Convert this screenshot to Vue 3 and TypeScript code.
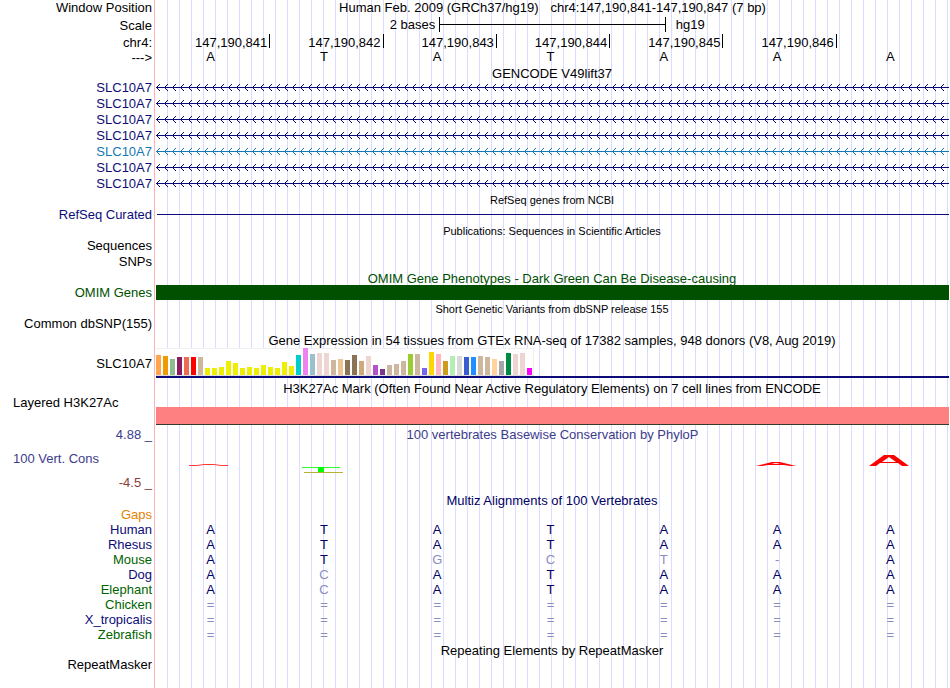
<script setup lang="ts">
interface Base {
  char: string
  match: boolean
}

interface Species {
  name: string
  tone: 'navy' | 'green'
  bases: Base[]
}

const sequence: string[] = ['A', 'T', 'A', 'T', 'A', 'A', 'A']
const positions: string[] = [
  '147,190,841',
  '147,190,842',
  '147,190,843',
  '147,190,844',
  '147,190,845',
  '147,190,846',
  '',
]

const genes: { id: number; tone: string }[] = [
  { id: 1, tone: 'navy' },
  { id: 2, tone: 'navy' },
  { id: 3, tone: 'navy' },
  { id: 4, tone: 'navy' },
  { id: 5, tone: 'blue' },
  { id: 6, tone: 'navy' },
  { id: 7, tone: 'navy' },
]

// Bar height in pixels and colour for each GTEx tissue.
const tissues: [number, string][] = [
  [20, '#ffa54f'], [19, '#ee9a00'], [16, '#8fbc8f'], [18, '#8b1c62'], [18, '#ee6a50'], [18, '#ff0000'],
  [18, '#cdb79e'], [7, '#eeee00'], [7, '#eeee00'], [8, '#eeee00'], [14, '#eeee00'], [12, '#eeee00'],
  [7, '#eeee00'], [8, '#eeee00'], [7, '#eeee00'], [10, '#eeee00'], [8, '#eeee00'], [7, '#eeee00'],
  [13, '#eeee00'], [9, '#eeee00'], [20, '#00cdcd'], [27, '#ee82ee'], [21, '#9ac0cd'], [22, '#eed5d2'],
  [22, '#eed5d2'], [15, '#cdb79e'], [16, '#eec591'], [15, '#8b7355'], [20, '#8b7355'], [14, '#cdaa7d'],
  [19, '#eed5d2'], [10, '#b452cd'], [6, '#7a378b'], [10, '#cdb79e'], [11, '#cdb79e'], [14, '#cdb79e'],
  [21, '#9acd32'], [21, '#cdb79e'], [7, '#7a67ee'], [23, '#ffd700'], [21, '#ffb6c1'], [14, '#cd9b1d'],
  [19, '#b4eeb4'], [19, '#d9d9d9'], [18, '#3a5fcd'], [18, '#1e90ff'], [19, '#cdb79e'], [18, '#cdb79e'],
  [16, '#ffd39b'], [14, '#a6a6a6'], [22, '#008b45'], [21, '#eed5d2'], [22, '#eed5d2'], [7, '#ff00ff'],
]

function align(name: string, tone: 'navy' | 'green', text: string): Species {
  return {
    name,
    tone,
    bases: [...text].map((char, i) => ({ char, match: char === sequence[i] })),
  }
}

const species: Species[] = [
  align('Human', 'navy', 'ATATAAA'),
  align('Rhesus', 'navy', 'ATATAAA'),
  align('Mouse', 'green', 'ATGCT-A'),
  align('Dog', 'navy', 'ACATAAA'),
  align('Elephant', 'green', 'ACATAAA'),
  align('Chicken', 'green', '======='),
  align('X_tropicalis', 'navy', '======='),
  align('Zebrafish', 'green', '======='),
]
</script>

<template>
  <main class="browser">
    <div class="row">
      <span class="label">Window Position</span>
      <h1 class="title position">
        <span>Human Feb. 2009 (GRCh37/hg19)</span><span>chr4:147,190,841-147,190,847 (7 bp)</span>
      </h1>
    </div>
    <div class="row ruler">
      <span class="label">Scale</span>
      <div class="scale">
        <span class="scale-size">2 bases</span>
        <span class="scale-bar"></span>
        <span class="scale-assembly">hg19</span>
      </div>
    </div>
    <div class="row ruler">
      <span class="label">chr4:</span>
      <div class="cells">
        <span v-for="(p, i) in positions" :key="i" class="tick" :class="{ open: !p }">{{ p }}</span>
      </div>
    </div>
    <div class="row strand">
      <span class="label">---&gt;</span>
      <div class="cells bases">
        <span v-for="(b, i) in sequence" :key="i">{{ b }}</span>
      </div>
    </div>

    <section>
      <h2 class="title">GENCODE V49lift37</h2>
      <div v-for="g in genes" :key="g.id" class="row" :class="g.tone">
        <span class="label">SLC10A7</span>
        <svg class="gene" aria-hidden="true" shape-rendering="crispEdges">
          <defs>
            <pattern :id="`strand-${g.id}`" width="8" height="16" patternUnits="userSpaceOnUse">
              <path
                d="M0 7h8v1H0zM1 6h1v1H1zM2 5h1v1H2zM3 4h1v1H3zM1 8h1v1H1zM2 9h1v1H2zM3 10h1v1H3z"
                fill="currentColor"
              />
            </pattern>
          </defs>
          <rect width="100%" height="16" :fill="`url(#strand-${g.id})`" />
        </svg>
      </div>
    </section>

    <section>
      <h2 class="title small">RefSeq genes from NCBI</h2>
      <div class="row navy">
        <span class="label">RefSeq Curated</span>
        <div class="refseq"></div>
      </div>
    </section>

    <section>
      <h2 class="title small">Publications: Sequences in Scientific Articles</h2>
      <div class="row"><span class="label">Sequences</span></div>
      <div class="row"><span class="label">SNPs</span></div>
    </section>

    <section class="omim">
      <h2 class="title">OMIM Gene Phenotypes - Dark Green Can Be Disease-causing</h2>
      <div class="row">
        <span class="label">OMIM Genes</span>
        <div class="omim-bar"></div>
      </div>
    </section>

    <section>
      <h2 class="title small">Short Genetic Variants from dbSNP release 155</h2>
      <div class="row"><span class="label">Common dbSNP(155)</span></div>
    </section>

    <section>
      <h2 class="title">Gene Expression in 54 tissues from GTEx RNA-seq of 17382 samples, 948 donors (V8, Aug 2019)</h2>
      <div class="row expression">
        <span class="label">SLC10A7</span>
        <div class="gtex">
          <div class="chart">
            <span
              v-for="(t, i) in tissues"
              :key="i"
              class="bar"
              :style="{ height: `${t[0]}px`, background: t[1] }"
            ></span>
          </div>
        </div>
      </div>
    </section>

    <section>
      <h2 class="title">H3K27Ac Mark (Often Found Near Active Regulatory Elements) on 7 cell lines from ENCODE</h2>
      <div class="row histone">
        <span class="label start">Layered H3K27Ac</span>
        <div class="signal"></div>
      </div>
    </section>

    <section class="phylop">
      <div class="row heading">
        <span class="label">4.88 _</span>
        <h2 class="title inline">100 vertebrates Basewise Conservation by PhyloP</h2>
      </div>
      <div class="row conservation">
        <div class="axis">
          <span class="label start">100 Vert. Cons</span>
          <span class="label minimum">-4.5 _</span>
        </div>
        <div class="cells logos">
          <svg viewBox="0 0 42 20" aria-hidden="true">
            <path d="M1 11.5H9L16 10.5H26L33 11.5H40" fill="none" stroke="#ff3c3c" />
          </svg>
          <svg viewBox="0 0 42 20" aria-hidden="true">
            <path d="M1 13.5H39" stroke="#32ff32" />
            <path d="M3 18.5H42" stroke="#b4b432" />
            <path d="M17 13H23V18H17Z" fill="#00ff00" />
          </svg>
          <i></i>
          <i></i>
          <i></i>
          <svg viewBox="0 0 42 20" aria-hidden="true">
            <path d="M1 12L17 8H25L41 12H35L29 11H13L7 12ZM16 10H26L21 9Z" fill="#ff0000" fill-rule="evenodd" />
          </svg>
          <svg viewBox="0 0 42 20" aria-hidden="true">
            <path
              d="M1 12L16 1H26L41 12H34L30 9H12L8 12ZM14 8H28L21 3Z"
              fill="#ff0000"
              fill-rule="evenodd"
            />
          </svg>
        </div>
      </div>
    </section>

    <section class="multiz">
      <h2 class="title">Multiz Alignments of 100 Vertebrates</h2>
      <table>
        <tbody>
          <tr>
            <th scope="row" class="gaps">Gaps</th>
            <td v-for="n in 7" :key="n"></td>
          </tr>
          <tr v-for="s in species" :key="s.name">
            <th scope="row" :class="s.tone">{{ s.name }}</th>
            <td v-for="(b, i) in s.bases" :key="i" :class="{ mismatch: !b.match }">{{ b.char }}</td>
          </tr>
        </tbody>
      </table>
    </section>

    <section>
      <h2 class="title">Repeating Elements by RepeatMasker</h2>
      <div class="row"><span class="label">RepeatMasker</span></div>
    </section>
  </main>
</template>

<style>
body {
  margin: 0;
  background: #fff;
}
</style>

<style scoped>
.browser {
  box-sizing: border-box;
  min-height: 100vh;
  margin-right: 1px;
  font: 13px/16px "Liberation Sans", Arial, Helvetica, sans-serif;
  color: #000;
  background:
    linear-gradient(#ffb4b4, #ffb4b4) 154px 0 / 1px 100% no-repeat,
    linear-gradient(#fff, #fff) 0 0 / 156px 100% no-repeat,
    linear-gradient(90deg, #dcdcff 1px, transparent 1px) 167px 0 / 12px 100% repeat-x;
}

.row {
  display: grid;
  grid-template-columns: 152px minmax(0, 1fr);
  column-gap: 4px;
  min-height: 16px;
}

.label {
  text-align: right;
  white-space: nowrap;
}

.label.start {
  padding-left: 13px;
  text-align: left;
}

.title {
  height: 15px;
  margin: 0 0 0 155px;
  font-size: 13px;
  font-weight: 400;
  line-height: 17px;
  text-align: center;
  white-space: nowrap;
}

.title.small {
  font-size: 11px;
}

.title.position,
.title.inline {
  margin: 0;
}

.title.position {
  display: flex;
  justify-content: center;
  gap: 12px;
  line-height: 15px;
}

.navy {
  color: #0c0c78;
}

.blue {
  color: #1478b4;
}

.green {
  color: #006400;
}

.ruler {
  height: 17px;
  line-height: 20px;
}

.row.strand {
  height: 15px;
  min-height: 0;
}

.scale {
  display: grid;
  grid-template-columns: 5fr 4fr 5fr;
}

.scale-size {
  padding-right: 4px;
  line-height: 17px;
  text-align: right;
}

.scale-assembly {
  padding-left: 10px;
  line-height: 17px;
}

.scale-bar {
  height: 15px;
  margin: 1px 0;
  border: solid #000;
  border-width: 0 1px;
  background: linear-gradient(#000, #000) 0 7px / 100% 1px no-repeat;
}

.cells {
  display: grid;
  grid-template-columns: repeat(7, minmax(0, 1fr));
}

.tick {
  height: 14px;
  margin: 1px -1px 0 0;
  padding-right: 2px;
  border-right: 1px solid #000;
  line-height: 17px;
  text-align: right;
}

.tick.open {
  border-color: transparent;
}

.bases {
  line-height: 14px;
  text-align: center;
}

.bases span {
  padding-right: 4px;
}

.gene {
  display: block;
  width: 100%;
  height: 16px;
}

.refseq {
  height: 1px;
  margin: 7px 0 0 1px;
  background: currentColor;
}

.omim {
  color: #005000;
}

.omim-bar {
  height: 15px;
  background: currentColor;
}

.expression {
  height: 33px;
  line-height: 34px;
}

.gtex {
  height: 30px;
  border-bottom: 2px solid #0c0c78;
  box-sizing: border-box;
  margin-top: 1px;
}

.chart {
  display: flex;
  align-items: flex-end;
  gap: 2px;
  box-sizing: border-box;
  width: 378px;
  height: 28px;
  border: solid #f0f0f0;
  border-width: 1px 1px 1px 0;
  border-bottom-color: #dcdcdc;
  background: #fff;
}

.bar {
  flex: 0 0 5px;
}

.histone {
  height: 30px;
}

.signal {
  height: 17px;
  margin-top: 12px;
  border-bottom: 1px solid #323c28;
  background: #ff8080;
}

.phylop {
  color: #3c3c8c;
}

.heading,
.heading .title {
  height: 18px;
  line-height: 20px;
}

.conservation {
  height: 49px;
  line-height: 18px;
}

.axis {
  display: flex;
  flex-direction: column;
  justify-content: space-between;
  padding-top: 7px;
}

.minimum {
  color: #8c3c3c;
}

.logos {
  justify-items: center;
  padding-top: 11px;
}

.logos svg {
  width: 42px;
  height: 20px;
  margin-right: 7px;
}

.multiz {
  color: #000064;
}

table {
  width: 100%;
  border-spacing: 0;
  table-layout: fixed;
}

th,
td {
  height: 15px;
  padding: 0 4px 0 0;
  font-weight: 400;
  line-height: 15px;
  text-align: center;
}

th {
  width: 152px;
  text-align: right;
}

.gaps {
  color: #e68200;
}

.mismatch {
  color: #8c8cbe;
}
</style>
